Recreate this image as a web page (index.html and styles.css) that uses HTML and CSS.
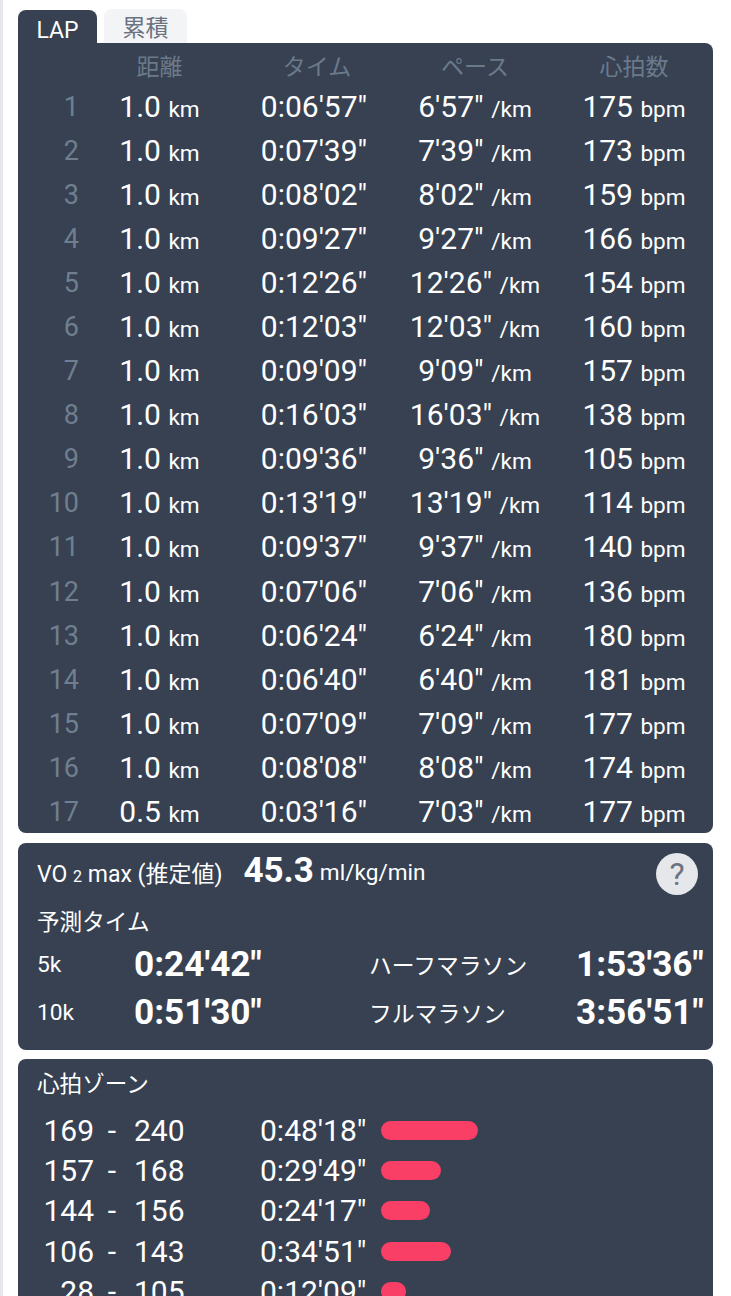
FILE: index.html
```html
<!DOCTYPE html>
<html lang="ja">

<head>
    <meta charset="UTF-8">
    <meta name="viewport" content="width=device-width, initial-scale=1.0">
    <title>LAP</title>
    <link rel="stylesheet" href="styles.css">
</head>

<body>
    <div class="tabs">
        <div class="tab active">LAP</div>
        <div class="tab">累積</div>
    </div>

    <div class="card lap-card">
        <div class="lap-row lap-head">
            <div class="no"></div>
            <div class="dist">距離</div>
            <div class="time">タイム</div>
            <div class="pace">ペース</div>
            <div class="hr">心拍数</div>
        </div>
        <div class="lap-row"><div class="no">1</div><div class="dist">1.0 <small>km</small></div><div class="time">0:06'57"</div><div class="pace">6'57" <small>/km</small></div><div class="hr">175 <small>bpm</small></div></div>
        <div class="lap-row"><div class="no">2</div><div class="dist">1.0 <small>km</small></div><div class="time">0:07'39"</div><div class="pace">7'39" <small>/km</small></div><div class="hr">173 <small>bpm</small></div></div>
        <div class="lap-row"><div class="no">3</div><div class="dist">1.0 <small>km</small></div><div class="time">0:08'02"</div><div class="pace">8'02" <small>/km</small></div><div class="hr">159 <small>bpm</small></div></div>
        <div class="lap-row"><div class="no">4</div><div class="dist">1.0 <small>km</small></div><div class="time">0:09'27"</div><div class="pace">9'27" <small>/km</small></div><div class="hr">166 <small>bpm</small></div></div>
        <div class="lap-row"><div class="no">5</div><div class="dist">1.0 <small>km</small></div><div class="time">0:12'26"</div><div class="pace">12'26" <small>/km</small></div><div class="hr">154 <small>bpm</small></div></div>
        <div class="lap-row"><div class="no">6</div><div class="dist">1.0 <small>km</small></div><div class="time">0:12'03"</div><div class="pace">12'03" <small>/km</small></div><div class="hr">160 <small>bpm</small></div></div>
        <div class="lap-row"><div class="no">7</div><div class="dist">1.0 <small>km</small></div><div class="time">0:09'09"</div><div class="pace">9'09" <small>/km</small></div><div class="hr">157 <small>bpm</small></div></div>
        <div class="lap-row"><div class="no">8</div><div class="dist">1.0 <small>km</small></div><div class="time">0:16'03"</div><div class="pace">16'03" <small>/km</small></div><div class="hr">138 <small>bpm</small></div></div>
        <div class="lap-row"><div class="no">9</div><div class="dist">1.0 <small>km</small></div><div class="time">0:09'36"</div><div class="pace">9'36" <small>/km</small></div><div class="hr">105 <small>bpm</small></div></div>
        <div class="lap-row"><div class="no">10</div><div class="dist">1.0 <small>km</small></div><div class="time">0:13'19"</div><div class="pace">13'19" <small>/km</small></div><div class="hr">114 <small>bpm</small></div></div>
        <div class="lap-row"><div class="no">11</div><div class="dist">1.0 <small>km</small></div><div class="time">0:09'37"</div><div class="pace">9'37" <small>/km</small></div><div class="hr">140 <small>bpm</small></div></div>
        <div class="lap-row"><div class="no">12</div><div class="dist">1.0 <small>km</small></div><div class="time">0:07'06"</div><div class="pace">7'06" <small>/km</small></div><div class="hr">136 <small>bpm</small></div></div>
        <div class="lap-row"><div class="no">13</div><div class="dist">1.0 <small>km</small></div><div class="time">0:06'24"</div><div class="pace">6'24" <small>/km</small></div><div class="hr">180 <small>bpm</small></div></div>
        <div class="lap-row"><div class="no">14</div><div class="dist">1.0 <small>km</small></div><div class="time">0:06'40"</div><div class="pace">6'40" <small>/km</small></div><div class="hr">181 <small>bpm</small></div></div>
        <div class="lap-row"><div class="no">15</div><div class="dist">1.0 <small>km</small></div><div class="time">0:07'09"</div><div class="pace">7'09" <small>/km</small></div><div class="hr">177 <small>bpm</small></div></div>
        <div class="lap-row"><div class="no">16</div><div class="dist">1.0 <small>km</small></div><div class="time">0:08'08"</div><div class="pace">8'08" <small>/km</small></div><div class="hr">174 <small>bpm</small></div></div>
        <div class="lap-row"><div class="no">17</div><div class="dist">0.5 <small>km</small></div><div class="time">0:03'16"</div><div class="pace">7'03" <small>/km</small></div><div class="hr">177 <small>bpm</small></div></div>
    </div>

    <div class="card vo2-card">
        <div class="vo2-line">
            <span class="vo2-label">VO <small>2</small> max (推定値)</span>
            <b class="vo2-value">45.3</b>
            <span class="vo2-unit">ml/kg/min</span>
            <div class="help">?</div>
        </div>
        <div class="card-title predict-title">予測タイム</div>
        <div class="predict-grid">
            <div class="dist-name">5k</div><b class="predict-time">0:24'42"</b>
            <div class="dist-name">ハーフマラソン</div><b class="predict-time right">1:53'36"</b>
            <div class="dist-name">10k</div><b class="predict-time">0:51'30"</b>
            <div class="dist-name">フルマラソン</div><b class="predict-time right">3:56'51"</b>
        </div>
    </div>

    <div class="card zone-card">
        <div class="card-title">心拍ゾーン</div>
        <div class="zone-list">
            <div class="zone-row"><div class="zone-low">169</div><div class="zone-dash">-</div><div class="zone-high">240</div><div class="zone-time">0:48'18"</div><div class="zone-bar" style="width: 97px"></div></div>
            <div class="zone-row"><div class="zone-low">157</div><div class="zone-dash">-</div><div class="zone-high">168</div><div class="zone-time">0:29'49"</div><div class="zone-bar" style="width: 60px"></div></div>
            <div class="zone-row"><div class="zone-low">144</div><div class="zone-dash">-</div><div class="zone-high">156</div><div class="zone-time">0:24'17"</div><div class="zone-bar" style="width: 49px"></div></div>
            <div class="zone-row"><div class="zone-low">106</div><div class="zone-dash">-</div><div class="zone-high">143</div><div class="zone-time">0:34'51"</div><div class="zone-bar" style="width: 70px"></div></div>
            <div class="zone-row"><div class="zone-low">28</div><div class="zone-dash">-</div><div class="zone-high">105</div><div class="zone-time">0:12'09"</div><div class="zone-bar" style="width: 25px"></div></div>
        </div>
    </div>
</body>

</html>
```

FILE: styles.css
```css
html, body {
    margin: 0;
    padding: 0;
    height: 1296px;
    overflow: hidden;
}

body {
    box-sizing: border-box;
    background-color: #fff;
    border-left: 3px solid #e5e7eb;
    padding: 9px 18px 0 15px;
    font-family: Roboto, "Noto Sans CJK JP", sans-serif;
    color: #fff;
}

.tabs {
    display: flex;
    align-items: flex-end;
    gap: 7px;
    height: 34px;
}

.tab {
    width: 83px;
    height: 34px;
    box-sizing: border-box;
    padding-top: 3px;
    border-radius: 8px 8px 0 0;
    background-color: #f3f4f6;
    color: #6b7280;
    font-size: 23px;
    line-height: 34px;
    text-align: center;
}

.tab.active {
    width: 79px;
    height: 33px;
    line-height: 35px;
    padding-top: 3px;
    background-color: #374151;
    color: #fff;
}

.card {
    background-color: #374151;
    border-radius: 8px;
    margin-bottom: 10px;
}

.lap-card {
    border-top-left-radius: 0;
    height: 790px;
    box-sizing: border-box;
    padding-top: 4px;
}

.lap-row {
    display: grid;
    grid-template-columns: 61px 161px 148px 174px 144px;
    height: 44.06px;
    line-height: 44px;
    font-size: 30px;
    text-align: center;
    white-space: nowrap;
}

.lap-row small {
    font-size: 22.6px;
}

.lap-head {
    height: 38px;
    line-height: 42px;
    font-size: 23px;
    color: #6b7a8a;
}

.lap-head .time {
    padding-left: 6px;
}

.no {
    color: #6f7f8f;
    font-size: 27px;
    text-align: right;
}

.vo2-card {
    height: 207px;
    margin-bottom: 9px;
    box-sizing: border-box;
    padding: 8px 10px 0 19px;
}

.vo2-line {
    display: flex;
    align-items: center;
    height: 42px;
    font-size: 23px;
}

.vo2-label small {
    font-size: 16px;
}

.vo2-value {
    margin: -3px 6px 0 21px;
    font-size: 35px;
}

.vo2-unit {
    font-size: 22.6px;
}

.help {
    width: 42px;
    height: 42px;
    margin: 4px 5px 0 auto;
    border-radius: 50%;
    background-color: #e5e7eb;
    color: #6b7280;
    font-size: 32px;
    line-height: 42px;
    text-align: center;
}

.card-title {
    font-size: 22.6px;
    line-height: 32px;
}

.predict-title {
    margin-top: 14px;
}

.predict-grid {
    display: grid;
    grid-template-columns: 97px 235px 207px 1fr;
    grid-auto-rows: 48px;
    align-items: center;
    margin-top: 1px;
    font-size: 22.8px;
    white-space: nowrap;
}

.predict-time {
    font-size: 35.2px;
}

.predict-time.right {
    text-align: right;
}

.zone-card {
    padding: 10px 19px 0;
    height: 300px;
}

.zone-list {
    margin-top: 9px;
}

.zone-row {
    display: flex;
    align-items: center;
    height: 40.3px;
    font-size: 30px;
    white-space: nowrap;
}

.zone-low {
    width: 57px;
    text-align: right;
}

.zone-dash {
    width: 36px;
    margin-right: 4px;
    text-align: center;
}

.zone-high {
    width: 126px;
}

.zone-time {
    width: 121px;
}

.zone-bar {
    height: 19px;
    border-radius: 10px;
    background-color: #f93f66;
}
```
